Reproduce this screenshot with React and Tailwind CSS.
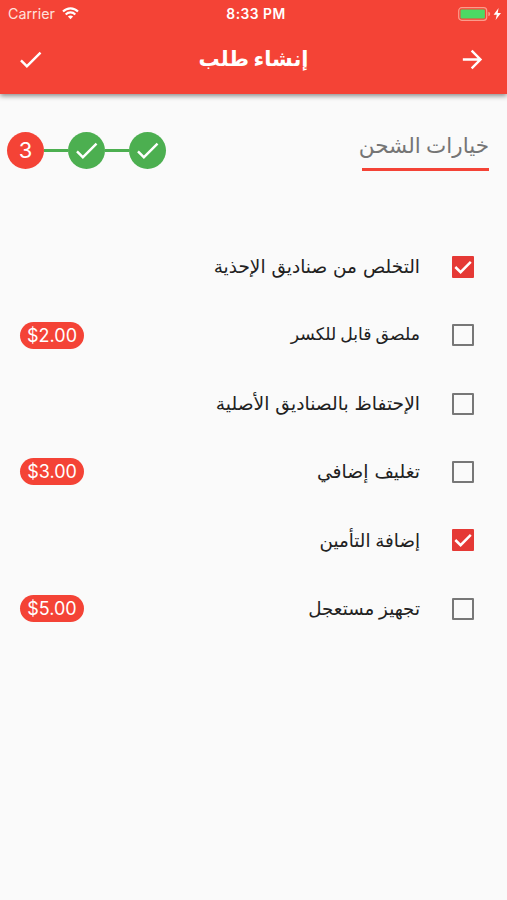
import { MdArrowForward, MdCheck } from 'react-icons/md';

const options = [
  { label: 'التخلص من صناديق الإحذية', checked: true, spacing: 'text-[18.5px]' },
  { label: 'ملصق قابل للكسر', price: '$2.00', spacing: 'text-[17.3px] [word-spacing:-1.5px]' },
  { label: 'الإحتفاظ بالصناديق الأصلية', spacing: 'text-[18.7px]' },
  { label: 'تغليف إضافي', price: '$3.00', spacing: 'text-[18.8px]' },
  { label: 'إضافة التأمين', checked: true, spacing: 'text-[18.3px] [word-spacing:-1px]' },
  { label: 'تجهيز مستعجل', price: '$5.00', spacing: 'text-[18.3px] [word-spacing:-1px]' }
];

function StatusBar() {
  return (
    <div dir="ltr" className="grid h-[28px] grid-cols-3 items-center pl-2 pr-[5px] text-[14.3px] leading-none text-[#ffe0dc]">
      <div className="flex items-center gap-[7px]">
        <span>Carrier</span>
        <svg width="17" height="13" viewBox="0 0 17 13" fill="none" stroke="white" strokeWidth="2.1">
          <path d="M1 4.6C5.2.3 11.8.3 16 4.6" />
          <path d="M3.7 7.4C6.4 4.7 10.6 4.7 13.3 7.4" />
          <path d="M8.5 12.3 5.9 9.6Q8.5 7.3 11.1 9.6Z" fill="white" stroke="none" />
        </svg>
      </div>
      <span className="pl-0.5 pt-px text-center text-[13.8px] font-semibold tracking-[0.5px] text-white">8:33 PM</span>
      <div className="flex items-center justify-end">
        <svg width="44" height="14" viewBox="0 0 44 14">
          <rect x="0.7" y="0.7" width="28" height="12.6" rx="3" fill="none" stroke="#fb9c8c" strokeWidth="1.2" />
          <rect x="2.5" y="2.5" width="24.4" height="9" rx="1.2" fill="#4cd964" />
          <path d="M30.3 4.8Q32.2 5.2 32.2 7T30.3 9.2Z" fill="#fb9c8c" />
          <path d="M40.6 1 35.6 7.7h3.2l-1.2 5.3 5.4-7h-3.3Z" fill="white" />
        </svg>
      </div>
    </div>
  );
}

function Header() {
  return (
    <header className="h-[94px] bg-[#f44336] text-white shadow-[0_2px_5px_rgba(0,0,0,0.45)]">
      <StatusBar />
      <div className="flex h-[63px] items-center justify-between px-5">
        <MdArrowForward className="size-[29px]" />
        <h1 className="font-['DejaVu_Sans'] text-[21px] font-bold [word-spacing:-3px]">إنشاء طلب</h1>
        <MdCheck className="size-[29px] translate-x-[-4px]" />
      </div>
    </header>
  );
}

function Steps() {
  return (
    <div dir="ltr" className="flex items-center text-white">
      <div className="flex size-[37px] items-center justify-center rounded-full bg-[#f44336] text-[22px]">3</div>
      {[1, 2].map((step) => (
        <div key={step} className="flex items-center">
          <div className="h-[2.5px] w-6 bg-[#4caf50]"></div>
          <div className="flex size-[37px] items-center justify-center rounded-full bg-[#4caf50]">
            <MdCheck className="size-[29px]" />
          </div>
        </div>
      ))}
    </div>
  );
}

function Checkbox({ checked }) {
  if (checked) {
    return (
      <div className="size-[22px] rounded-[1px] bg-[#e53935]">
        <svg viewBox="0 0 22 22" fill="none" stroke="white" strokeWidth="2.5">
          <path d="M3.3 11 8.6 16.2 18.8 5.9" />
        </svg>
      </div>
    );
  }
  return <div className="size-[22px] rounded-[1px] border-2 border-[#777]"></div>;
}

function OptionRow({ label, price, checked, spacing }) {
  return (
    <div className="flex h-[68.4px] items-center">
      <Checkbox checked={checked} />
      <span className={`mr-8 whitespace-nowrap font-['DejaVu_Sans'] text-[#212121] ${spacing}`}>{label}</span>
      {price && (
        <span dir="ltr" className="mr-auto flex h-[27px] w-16 items-center justify-center rounded-full bg-[#f44336] text-[18px] text-white">
          {price}
        </span>
      )}
    </div>
  );
}

export default function App() {
  return (
    <div dir="rtl" className="h-[900px] w-[507px] overflow-hidden bg-[#fafafa] font-['Inter',sans-serif]">
      <Header />
      <div className="flex items-start justify-between pl-[7px] pr-[18px] pt-[38px]">
        <div className="h-[39px] w-[127px] border-b-[3px] border-[#f44336]">
          <h2 className="whitespace-nowrap font-['DejaVu_Sans'] text-[21.5px] leading-7 text-[#757575] [word-spacing:-1.5px]">
            خيارات الشحن
          </h2>
        </div>
        <Steps />
      </div>
      <div className="mt-[61.6px] pl-5 pr-[33px]">
        {options.map((option) => (
          <OptionRow key={option.label} {...option} />
        ))}
      </div>
    </div>
  );
}
